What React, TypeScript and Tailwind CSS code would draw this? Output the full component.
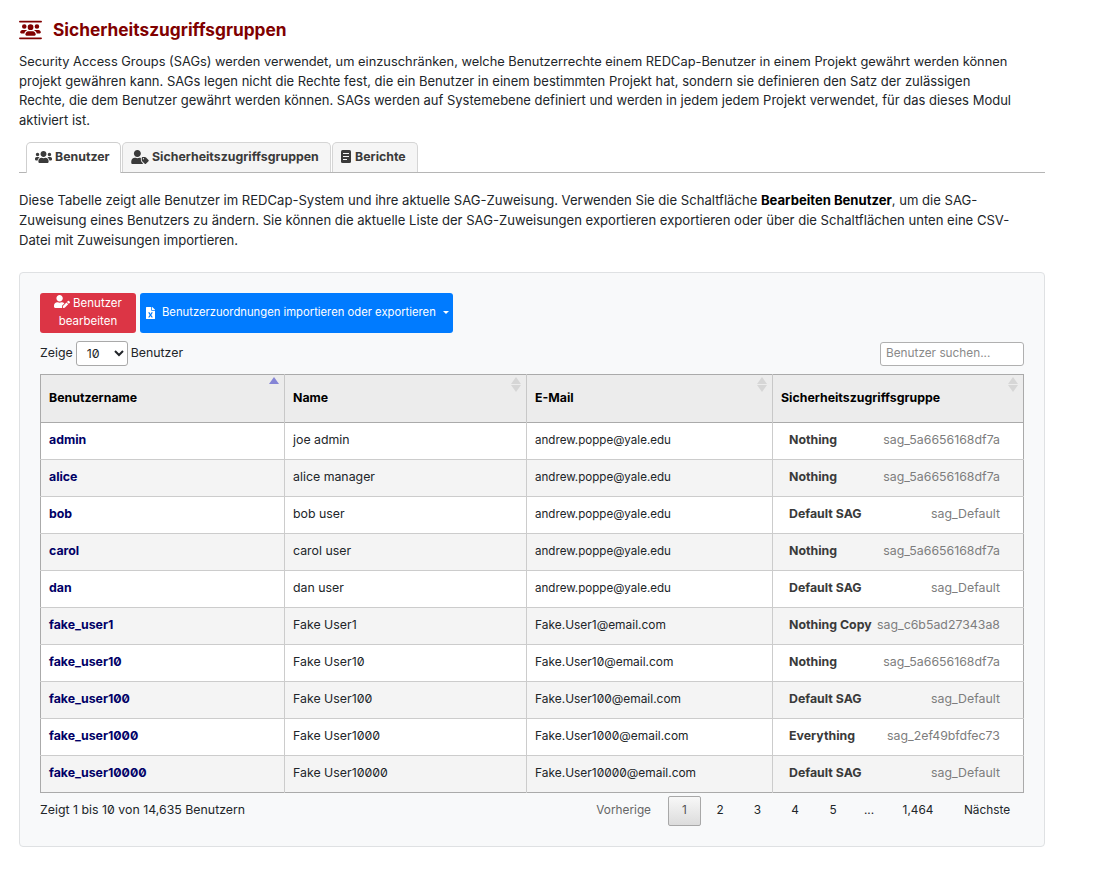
import { FaFileExcel, FaUserEdit, FaUsers, FaUserTag } from "react-icons/fa";
import { FaUsersBetweenLines } from "react-icons/fa6";

const users = [
  ["admin", "joe admin", "andrew.poppe@yale.edu", "Nothing", "sag_5a6656168df7a"],
  ["alice", "alice manager", "andrew.poppe@yale.edu", "Nothing", "sag_5a6656168df7a"],
  ["bob", "bob user", "andrew.poppe@yale.edu", "Default SAG", "sag_Default"],
  ["carol", "carol user", "andrew.poppe@yale.edu", "Nothing", "sag_5a6656168df7a"],
  ["dan", "dan user", "andrew.poppe@yale.edu", "Default SAG", "sag_Default"],
  ["fake_user1", "Fake User1", "Fake.User1@email.com", "Nothing Copy", "sag_c6b5ad27343a8"],
  ["fake_user10", "Fake User10", "Fake.User10@email.com", "Nothing", "sag_5a6656168df7a"],
  ["fake_user100", "Fake User100", "Fake.User100@email.com", "Default SAG", "sag_Default"],
  ["fake_user1000", "Fake User1000", "Fake.User1000@email.com", "Everything", "sag_2ef49bfdfec73"],
  ["fake_user10000", "Fake User10000", "Fake.User10000@email.com", "Default SAG", "sag_Default"],
];

function SortArrows({ active }: { active?: boolean }) {
  return (
    <span className="absolute right-[5px] top-[2px] flex flex-col gap-[1px]">
      <span className={`w-0 h-0 border-x-[5px] border-x-transparent border-b-[7px] ${active ? "border-b-[#8585d6]" : "border-b-[#d6d6d6]"}`} />
      {!active && <span className="w-0 h-0 border-x-[5px] border-x-transparent border-t-[7px] border-t-[#d6d6d6]" />}
    </span>
  );
}

// report icon: rounded page with three text lines
function ReportIcon() {
  return (
    <svg viewBox="0 0 10 13" className="w-[10px] h-[13px] shrink-0">
      <rect width="10" height="13" rx="1.5" fill="#3a3a3a" />
      <path d="M2 3.5h6M2 6.5h6M2 9.5h4" stroke="#f5f5f5" strokeWidth="1" />
    </svg>
  );
}

export default function App() {
  const headers = ["Benutzername", "Name", "E-Mail", "Sicherheitszugriffsgruppe"];

  return (
    <div className="w-[1103px] h-[878px] overflow-hidden bg-white pl-[19px] pt-[19px] text-[12.35px] text-[#212529] [font-family:Inter,sans-serif] [font-feature-settings:'zero']">
      <div className="w-[1026px]">
        <div className="flex items-center h-[22px] text-[#800000]">
          <FaUsersBetweenLines className="w-[23px] h-[20px]" />
          <h1 className="ml-[11px] text-[17.3px] font-bold">Sicherheitszugriffsgruppen</h1>
        </div>

        <p className="mt-[11px] w-[1010px] text-[13px] first-line:text-[12.85px] leading-[19.6px]">
          Security Access Groups (SAGs) werden verwendet, um einzuschränken, welche Benutzerrechte einem REDCap-Benutzer in einem Projekt gewährt werden können projekt gewähren kann. SAGs legen nicht die Rechte fest, die ein Benutzer in einem bestimmten Projekt hat, sondern sie definieren den Satz der zulässigen<br />Rechte, die dem Benutzer gewährt werden können. SAGs werden auf Systemebene definiert und werden in jedem jedem Projekt verwendet, für das dieses Modul<br />aktiviert ist.
        </p>

        <div className="mt-[12px] flex h-[31px] border-b border-[#b5b5b5] pl-[7px] gap-[1px] text-[#3a3a3a] font-bold">
          <div className="flex items-center gap-[3px] w-[95px] h-[31px] pl-[8px] pb-[2px] bg-white border border-b-0 border-[#cfcfcf] rounded-t-[5px]">
            <FaUsers className="w-[17px] h-[14px] shrink-0" />
            Benutzer
          </div>
          <div className="flex items-center gap-[3px] w-[209px] h-[30px] pl-[8px] pb-[2px] bg-[#f5f5f5] border border-b-0 border-[#d5d5d5] rounded-t-[5px]">
            <FaUserTag className="w-[18px] h-[14px] shrink-0" />
            Sicherheitszugriffsgruppen
          </div>
          <div className="flex items-center gap-[4px] w-[86px] h-[30px] pl-[8px] pb-[2px] bg-[#f5f5f5] border border-b-0 border-[#d5d5d5] rounded-t-[5px]">
            <ReportIcon />
            Berichte
          </div>
        </div>

        <p className="mt-[18px] w-[995px] text-[13.08px] leading-[19.6px]">
          Diese Tabelle zeigt alle Benutzer im REDCap-System und ihre aktuelle SAG-Zuweisung. Verwenden Sie die Schaltfläche <b className="text-black">Bearbeiten Benutzer</b>, um die SAG-Zuweisung eines Benutzers zu ändern. Sie können die aktuelle Liste der SAG-Zuweisungen exportieren exportieren oder über die Schaltflächen unten eine CSV-Datei mit Zuweisungen importieren.
        </p>

        <div className="mt-[22px] h-[575px] border border-[#dfe1e3] rounded-[4px] bg-[#f8f9fa] pt-[20px] px-[20px]">
          <div className="flex gap-[4px] text-white text-[11.5px]">
            <div className="w-[96px] h-[40px] bg-[#dc3545] rounded-[3px] text-center leading-[18px] pt-[1px]">
              <FaUserEdit className="inline w-[16px] h-[13px] mr-[3px] align-[-1px]" />
              Benutzer bearbeiten
            </div>
            <div className="flex items-center h-[40px] w-[313px] pl-[6px] pb-[1px] bg-[#007bff] rounded-[3px] whitespace-nowrap text-[11.25px]">
              <FaFileExcel className="w-[9px] h-[12px] mr-[7px] shrink-0" />
              Benutzerzuordnungen importieren oder exportieren
              <span className="ml-[7px] w-0 h-0 border-x-[3px] border-x-transparent border-t-[3px] border-t-white" />
            </div>
          </div>

          <div className="mt-[8px] flex items-center justify-between h-[25px]">
            <div className="flex items-center gap-[3px]">
              Zeige
              <select className="w-[52px] h-[25px] border border-[#a9a9a9] rounded-[3px] bg-white pl-[6px] text-[12.35px]" defaultValue="10">
                <option value="10">10</option>
              </select>
              Benutzer
            </div>
            <input
              className="w-[144px] h-[24px] border border-[#b0b0b0] rounded-[3px] bg-white px-[5px] pb-[1px] text-[11.8px] placeholder:text-[#8a8a8a]"
              placeholder="Benutzer suchen..."
            />
          </div>

          <table className="mt-[8px] w-[983px] table-fixed border-collapse border border-[#aaaaaa]">
            <colgroup>
              <col className="w-[244px]" />
              <col className="w-[242px]" />
              <col className="w-[246px]" />
              <col className="w-[251px]" />
            </colgroup>
            <thead>
              <tr className="h-[48px] bg-[#ececec] border-b border-[#aaaaaa] text-black">
                {headers.map((header, index) => (
                  <th key={header} className="relative px-[8px] text-left font-bold border-l border-[#c8c8c8] first:border-l-0">
                    {header}
                    <SortArrows active={index === 0} />
                  </th>
                ))}
              </tr>
            </thead>
            <tbody>
              {users.map(([username, name, email, group, id], index) => (
                <tr key={username} className={`h-[37px] border-t border-[#cccccc] ${index % 2 ? "bg-[#f4f4f4]" : "bg-white"}`}>
                  <td className="px-[8px] pb-[2px] font-bold text-[#000066]">{username}</td>
                  <td className="px-[8px] pb-[2px] border-l border-[#cccccc]">{name}</td>
                  <td className={`px-[8px] border-l border-[#cccccc] ${index < 5 ? "pb-[1px] text-[11.6px]" : "pb-[3px] text-[11.95px]"}`}>{email}</td>
                  <td className="pl-[16px] pr-[23px] pb-[2px] border-l border-[#cccccc]">
                    <div className="flex justify-between whitespace-nowrap">
                      <span className="font-bold text-[#3a3a3a]">{group}</span>
                      <span className="text-[#7d7d7d]">{id}</span>
                    </div>
                  </td>
                </tr>
              ))}
            </tbody>
          </table>

          <div className="flex justify-between mt-[3px]">
            <div className="pt-[5px]">Zeigt 1 bis 10 von 14,635 Benutzern</div>
            <div className="flex items-center h-[30px] text-[11.8px]">
              <span className="text-[#666666] mr-[17px]">Vorherige</span>
              <span className="flex items-center justify-center w-[33px] h-[30px] border border-[#a8a8a8] rounded-[2px] bg-gradient-to-b from-[#f8f8f8] to-[#dcdcdc] text-[#555555]">1</span>
              <span className="w-[38px] text-center">2</span>
              <span className="w-[37px] text-center">3</span>
              <span className="w-[38px] text-center">4</span>
              <span className="w-[38px] text-center">5</span>
              <span className="w-[34px] text-center">...</span>
              <span className="w-[64px] text-center">1,464</span>
              <span className="w-[74px] text-center">Nächste</span>
            </div>
          </div>
        </div>
      </div>
    </div>
  );
}
